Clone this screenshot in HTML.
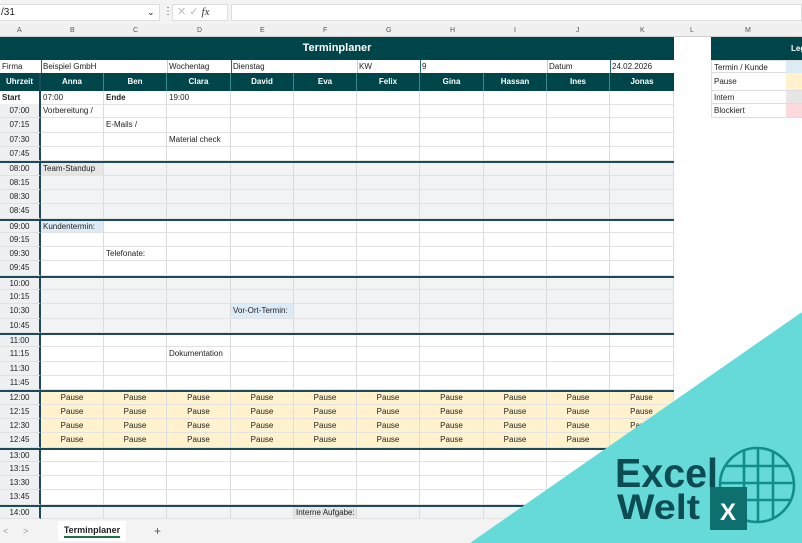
<!DOCTYPE html>
<html><head><meta charset="utf-8"><style>
*{box-sizing:border-box;margin:0;padding:0}
body{width:802px;height:543px;overflow:hidden;background:#fff;font-family:"Liberation Sans",sans-serif;font-size:8px;color:#222;position:relative}
.abs{position:absolute}
.g{display:grid;grid-template-columns:41px 63px 63px 64px 63px 63px 63px 64px 63px 63px 64px;width:674px}
.row{height:14.32px}
.row>div{border-right:1px solid #dcdcdc;border-bottom:1px solid #e2e2e2;padding-left:2px;line-height:13px;white-space:nowrap;overflow:visible}
.row>div:first-child{background:#eef0f2;text-align:center;border-right:2px solid #1d4a5a;padding:0}
.row.h{border-top:2px solid #1d4a5a;height:14.32px}
.row.h>div{line-height:11px}
.gr>div{background:#f2f3f5}
.p>div{background:#fff2cc;text-align:center;padding:0}
.p>div:first-child{background:#eef0f2}
.hdr{background:#004549;color:#fff;font-weight:bold}
</style></head><body>
<div class="abs" style="left:0;top:0;width:802px;height:24px;background:#f3f3f3"></div>
<div class="abs" style="left:0;top:4px;width:160px;height:17px;background:#fff;border:1px solid #ddd;border-left:none;font-size:10px;line-height:15px;padding-left:1px">/31<span style="position:absolute;left:147px;top:0;font-size:9px">⌄</span></div>
<div class="abs" style="left:163px;top:4px;font-size:10px;color:#555;line-height:16px">⋮</div>
<div class="abs" style="left:172px;top:4px;width:56px;height:17px;background:#fff;border:1px solid #ddd;color:#bbb;font-size:11px;line-height:15px;padding-left:4px">✕ ✓ <i style="color:#333;font-family:'Liberation Serif',serif">fx</i></div>
<div class="abs" style="left:231px;top:4px;width:571px;height:17px;background:#fff;border:1px solid #ddd"></div>
<div class="abs" style="left:0;top:24px;width:802px;height:13px;background:#f0f0f0;border-bottom:1px solid #d0d0d0;color:#555;font-size:7px;line-height:13px">
<span class="abs" style="left:17px">A</span><span class="abs" style="left:70px">B</span><span class="abs" style="left:133px">C</span><span class="abs" style="left:197px">D</span><span class="abs" style="left:260px">E</span><span class="abs" style="left:323px">F</span><span class="abs" style="left:386px">G</span><span class="abs" style="left:450px">H</span><span class="abs" style="left:514px">I</span><span class="abs" style="left:576px">J</span><span class="abs" style="left:640px">K</span><span class="abs" style="left:690px">L</span><span class="abs" style="left:745px">M</span></div>
<div class="abs hdr" style="left:0;top:37px;width:674px;height:23px;font-size:11px;line-height:23px;text-align:center">Terminplaner</div>
<div class="abs hdr" style="left:711px;top:37px;width:91px;height:23px;font-size:8px;line-height:23px;padding-left:80px">Leg</div>
<div class="abs" style="left:0;top:60px;width:674px;height:13px;line-height:13px;font-size:8px">
<span class="abs" style="left:2px">Firma</span><span class="abs" style="left:43px">Beispiel GmbH</span><span class="abs" style="left:169px">Wochentag</span><span class="abs" style="left:233px">Dienstag</span><span class="abs" style="left:359px">KW</span><span class="abs" style="left:422px">9</span><span class="abs" style="left:549px">Datum</span><span class="abs" style="left:612px">24.02.2026</span>
<div class="abs" style="left:41px;top:0;width:1px;height:13px;background:#2a6a70"></div><div class="abs" style="left:167px;top:0;width:1px;height:13px;background:#ccc"></div><div class="abs" style="left:231px;top:0;width:1px;height:13px;background:#2a6a70"></div><div class="abs" style="left:357px;top:0;width:1px;height:13px;background:#ccc"></div><div class="abs" style="left:420px;top:0;width:1px;height:13px;background:#2a6a70"></div><div class="abs" style="left:547px;top:0;width:1px;height:13px;background:#ccc"></div><div class="abs" style="left:610px;top:0;width:1px;height:13px;background:#2a6a70"></div></div>
<div class="abs" style="left:711px;top:60px;width:91px;font-size:8px">
<div style="height:13px;line-height:13px;border:1px solid #ddd;padding-left:2px;position:relative">Termin / Kunde<span class="abs" style="left:74px;top:0;width:20px;height:12px;background:#ddebf7"></span></div>
<div style="height:18px;line-height:18px;border:1px solid #ddd;border-top:none;padding-left:2px;position:relative">Pause<span class="abs" style="left:74px;top:0;width:20px;height:17px;background:#fff2cc"></span></div>
<div style="height:13px;line-height:13px;border:1px solid #ddd;border-top:none;padding-left:2px;position:relative">Intern<span class="abs" style="left:74px;top:0;width:20px;height:12px;background:#e6e6e6"></span></div>
<div style="height:14px;line-height:13px;border:1px solid #ddd;border-top:none;padding-left:2px;position:relative">Blockiert<span class="abs" style="left:74px;top:0;width:20px;height:13px;background:#fcd9dc"></span></div></div>
<div class="abs g hdr" style="left:0;top:73px;height:18px;line-height:18px;text-align:center;font-size:8px">
<div style="border-right:2px solid #1d4a5a">Uhrzeit</div><div style="border-right:1px solid #3a8a8e">Anna</div><div style="border-right:1px solid #3a8a8e">Ben</div><div style="border-right:1px solid #3a8a8e">Clara</div><div style="border-right:1px solid #3a8a8e">David</div><div style="border-right:1px solid #3a8a8e">Eva</div><div style="border-right:1px solid #3a8a8e">Felix</div><div style="border-right:1px solid #3a8a8e">Gina</div><div style="border-right:1px solid #3a8a8e">Hassan</div><div style="border-right:1px solid #3a8a8e">Ines</div><div>Jonas</div></div>
<div class="abs" style="left:0;top:91px;width:674px">
<div class="g row" style="height:13px"><div style="background:#fff;text-align:left;padding-left:2px;font-weight:bold">Start</div><div>07:00</div><div style="font-weight:bold">Ende</div><div>19:00</div><div></div><div></div><div></div><div></div><div></div><div></div><div></div></div>
<div class="g row"><div>07:00</div><div>Vorbereitung /</div><div></div><div></div><div></div><div></div><div></div><div></div><div></div><div></div><div></div></div>
<div class="g row"><div>07:15</div><div></div><div>E-Mails /</div><div></div><div></div><div></div><div></div><div></div><div></div><div></div><div></div></div>
<div class="g row"><div>07:30</div><div></div><div></div><div>Material check</div><div></div><div></div><div></div><div></div><div></div><div></div><div></div></div>
<div class="g row"><div>07:45</div><div></div><div></div><div></div><div></div><div></div><div></div><div></div><div></div><div></div><div></div></div>
<div class="g row h gr"><div>08:00</div><div style="background:#e6e6e6">Team-Standup</div><div></div><div></div><div></div><div></div><div></div><div></div><div></div><div></div><div></div></div>
<div class="g row gr"><div>08:15</div><div></div><div></div><div></div><div></div><div></div><div></div><div></div><div></div><div></div><div></div></div>
<div class="g row gr"><div>08:30</div><div></div><div></div><div></div><div></div><div></div><div></div><div></div><div></div><div></div><div></div></div>
<div class="g row gr"><div>08:45</div><div></div><div></div><div></div><div></div><div></div><div></div><div></div><div></div><div></div><div></div></div>
<div class="g row h"><div>09:00</div><div style="background:#ddebf7">Kundentermin:</div><div></div><div></div><div></div><div></div><div></div><div></div><div></div><div></div><div></div></div>
<div class="g row"><div>09:15</div><div></div><div></div><div></div><div></div><div></div><div></div><div></div><div></div><div></div><div></div></div>
<div class="g row"><div>09:30</div><div></div><div>Telefonate:</div><div></div><div></div><div></div><div></div><div></div><div></div><div></div><div></div></div>
<div class="g row"><div>09:45</div><div></div><div></div><div></div><div></div><div></div><div></div><div></div><div></div><div></div><div></div></div>
<div class="g row h gr"><div>10:00</div><div></div><div></div><div></div><div></div><div></div><div></div><div></div><div></div><div></div><div></div></div>
<div class="g row gr"><div>10:15</div><div></div><div></div><div></div><div></div><div></div><div></div><div></div><div></div><div></div><div></div></div>
<div class="g row gr"><div>10:30</div><div></div><div></div><div></div><div style="background:#ddebf7">Vor-Ort-Termin:</div><div></div><div></div><div></div><div></div><div></div><div></div></div>
<div class="g row gr"><div>10:45</div><div></div><div></div><div></div><div></div><div></div><div></div><div></div><div></div><div></div><div></div></div>
<div class="g row h"><div>11:00</div><div></div><div></div><div></div><div></div><div></div><div></div><div></div><div></div><div></div><div></div></div>
<div class="g row"><div>11:15</div><div></div><div></div><div>Dokumentation</div><div></div><div></div><div></div><div></div><div></div><div></div><div></div></div>
<div class="g row"><div>11:30</div><div></div><div></div><div></div><div></div><div></div><div></div><div></div><div></div><div></div><div></div></div>
<div class="g row"><div>11:45</div><div></div><div></div><div></div><div></div><div></div><div></div><div></div><div></div><div></div><div></div></div>
<div class="g row h p"><div>12:00</div><div>Pause</div><div>Pause</div><div>Pause</div><div>Pause</div><div>Pause</div><div>Pause</div><div>Pause</div><div>Pause</div><div>Pause</div><div>Pause</div></div>
<div class="g row p"><div>12:15</div><div>Pause</div><div>Pause</div><div>Pause</div><div>Pause</div><div>Pause</div><div>Pause</div><div>Pause</div><div>Pause</div><div>Pause</div><div>Pause</div></div>
<div class="g row p"><div>12:30</div><div>Pause</div><div>Pause</div><div>Pause</div><div>Pause</div><div>Pause</div><div>Pause</div><div>Pause</div><div>Pause</div><div>Pause</div><div>Pause</div></div>
<div class="g row p"><div>12:45</div><div>Pause</div><div>Pause</div><div>Pause</div><div>Pause</div><div>Pause</div><div>Pause</div><div>Pause</div><div>Pause</div><div>Pause</div><div>Pause</div></div>
<div class="g row h"><div>13:00</div><div></div><div></div><div></div><div></div><div></div><div></div><div></div><div></div><div></div><div></div></div>
<div class="g row"><div>13:15</div><div></div><div></div><div></div><div></div><div></div><div></div><div></div><div></div><div></div><div></div></div>
<div class="g row"><div>13:30</div><div></div><div></div><div></div><div></div><div></div><div></div><div></div><div></div><div></div><div></div></div>
<div class="g row"><div>13:45</div><div></div><div></div><div></div><div></div><div></div><div></div><div></div><div></div><div></div><div></div></div>
<div class="g row h gr"><div>14:00</div><div></div><div></div><div></div><div></div><div style="background:#e6e6e6">Interne Aufgabe:</div><div></div><div></div><div></div><div></div><div></div></div>
</div>
<div class="abs" style="left:0;top:519px;width:802px;height:24px;background:#f3f3f3;font-size:9px;line-height:24px;color:#999">
<span class="abs" style="left:3px">&lt;</span><span class="abs" style="left:23px">&gt;</span>
<div class="abs" style="left:58px;top:2px;width:68px;height:20px;background:#fff;color:#222;font-weight:bold;text-align:center;line-height:18px">Terminplaner<div style="position:absolute;left:6px;bottom:3px;width:56px;height:2px;background:#1e7145"></div></div>
<span class="abs" style="left:154px;font-size:12px;color:#555">+</span></div>
<svg class="abs" style="left:0;top:0" width="802" height="543" viewBox="0 0 802 543">
<polygon points="470,543 802,312 802,543" fill="#66d9d9"/>
<g fill="none" stroke="#138c8c" stroke-width="2.6">
<circle cx="757" cy="485" r="37"/>
<line x1="724" y1="466" x2="790" y2="466"/><line x1="720" y1="483" x2="794" y2="483"/><line x1="722" y1="500" x2="792" y2="500"/>
<line x1="744" y1="450" x2="744" y2="520"/><line x1="758" y1="448" x2="758" y2="522"/><line x1="773" y1="451" x2="773" y2="519"/>
</g>
<text x="615" y="487" font-family="Liberation Sans,sans-serif" font-weight="bold" font-size="41" fill="#0c4c52" textLength="103" lengthAdjust="spacingAndGlyphs">Excel</text>
<text x="617" y="519" font-family="Liberation Sans,sans-serif" font-weight="bold" font-size="35" fill="#0c4c52" textLength="83" lengthAdjust="spacingAndGlyphs">Welt</text>
<rect x="710" y="487" width="37" height="43" fill="#0e6f6f"/>
<text x="728" y="520" text-anchor="middle" font-family="Liberation Sans,sans-serif" font-weight="bold" font-size="24" fill="#fff">X</text>
</svg>
</body></html>
